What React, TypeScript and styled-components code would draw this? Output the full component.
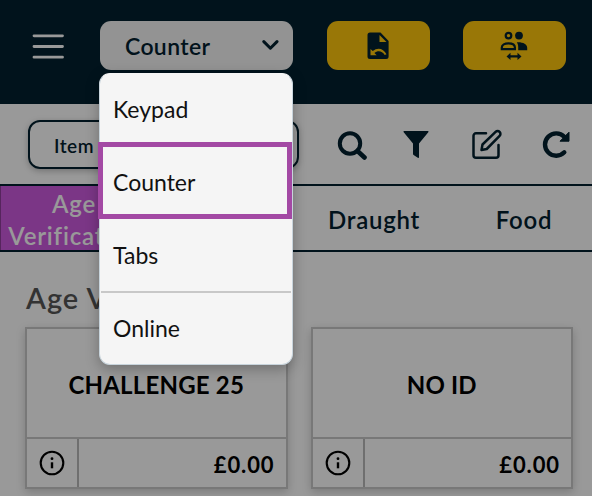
import React from 'react';
import styled, { createGlobalStyle } from 'styled-components';

const ink = '#03212f';

const GlobalStyle = createGlobalStyle`
  *, *::before, *::after { box-sizing: border-box; }
  body {
    margin: 0;
    overflow: hidden;
    background: #fff;
    font-family: Lato, "Liberation Sans", sans-serif;
  }
  svg { display: block; flex: none; }
`;

const Screen = styled.div`
  position: relative;
  width: 592px;
  height: 496px;
  overflow: hidden;
  background: #fff;
  color: ${ink};
`;

const Header = styled.header`
  display: flex;
  align-items: flex-start;
  height: 104px;
  padding: 21px 26px 0 32px;
  background: ${ink};
`;

const MenuButton = styled.div`
  display: flex;
  align-items: center;
  height: 51px;
  width: 68px;
`;

const SelectWrap = styled.div`
  width: 192.5px;
  margin-right: 34px;
`;

const Select = styled.div`
  display: flex;
  align-items: center;
  justify-content: space-between;
  height: 49px;
  padding: 1px 13px 0 25px;
  border-radius: 11px;
  background: #f5f5f5;
  font-size: 23px;
  font-weight: 600;
  letter-spacing: 0.35px;
`;

const Action = styled.div`
  display: flex;
  align-items: center;
  justify-content: center;
  width: 103px;
  height: 49px;
  padding-right: 1px;
  border-radius: 11px;
  background: #ffc60c;
  & + & { margin-left: 33px; }
`;

const Toolbar = styled.div`
  display: flex;
  align-items: flex-start;
  height: 80px;
  padding: 16px 20px 0 28px;
`;

const SearchField = styled.div`
  width: 271px;
  height: 49px;
  padding: 12px 24px 0;
  border: 2px solid ${ink};
  border-radius: 12px;
  box-shadow: 0 2px 6px rgba(0, 0, 0, 0.25);
  font-size: 19px;
  line-height: 24px;
  font-weight: 600;
  letter-spacing: 0.5px;
`;

const Tools = styled.div`
  display: grid;
  grid-template-columns: 66px 69px 70px 28px;
  margin: 9px 0 0 38px;
`;

const Tabs = styled.nav`
  display: grid;
  grid-template-columns: 150px 150px 150px 150px;
  height: 68px;
  border-top: 2px solid ${ink};
  border-bottom: 2px solid ${ink};
`;

const Tab = styled.div<{ $active?: boolean }>`
  display: flex;
  align-items: center;
  justify-content: center;
  height: 64px;
  padding: ${(p) => (p.$active ? '3px 3px 0 0' : '3px 2px 0 0')};
  text-align: center;
  font-size: 24px;
  line-height: 32px;
  font-weight: 600;
  letter-spacing: ${(p) => (p.$active ? '0.8px' : '0.7px')};
  color: ${(p) => (p.$active ? '#fff' : ink)};
  background: ${(p) => (p.$active ? '#cd5adf' : 'transparent')};
  border-left: ${(p) => (p.$active ? '1px solid #8f3f9c' : '0')};
`;

const Content = styled.main`
  padding: 26px 19px 0 25px;
`;

const Title = styled.h2`
  height: 49px;
  margin: 0;
  padding-left: 1px;
  font-size: 29px;
  line-height: 40px;
  font-weight: 600;
  letter-spacing: 1px;
  color: #555;
`;

const Cards = styled.div`
  display: flex;
  gap: 23px;
`;

const Card = styled.article`
  display: flex;
  flex-direction: column;
  width: 262.5px;
  height: 162px;
  border: 2px solid #c8c8c8;
  box-shadow: 0 3px 9px rgba(0, 0, 0, 0.2);
`;

const CardName = styled.div`
  display: flex;
  flex: 1;
  align-items: center;
  justify-content: center;
  padding-top: 3px;
  font-size: 24px;
  font-weight: 700;
  letter-spacing: 0.2px;
  color: #000;
`;

const CardFooter = styled.div`
  display: flex;
  height: 50px;
  border-top: 2px solid #c8c8c8;
`;

const InfoCell = styled.div`
  display: flex;
  align-items: center;
  justify-content: center;
  width: 52px;
  border-right: 2px solid #b9b9b9;
`;

const Price = styled.div`
  display: flex;
  flex: 1;
  align-items: center;
  justify-content: flex-end;
  padding: 2px 11px 0 0;
  font-size: 22px;
  font-weight: 700;
  letter-spacing: 0.9px;
  color: #000;
`;

const Backdrop = styled.div`
  position: absolute;
  inset: 0;
  background: rgba(0, 0, 0, 0.4);
`;

const Menu = styled.div`
  position: absolute;
  left: 99px;
  top: 73px;
  width: 193.5px;
  height: 292px;
  border: 1px solid #c8d4dc;
  border-top-color: #f5f5f5;
  border-radius: 11px;
  background: #f5f5f5;
  box-shadow: 0 4px 14px rgba(0, 0, 0, 0.28);
`;

const MenuItem = styled.div<{ $divided?: boolean }>`
  display: flex;
  align-items: center;
  height: 73px;
  margin: ${(p) => (p.$divided ? '-2px' : '0')} 1px 0;
  padding: 0 0 ${(p) => (p.$divided ? '2px' : '4px')} 12px;
  border-top: ${(p) => (p.$divided ? '2px solid #c8c8c8' : '0')};
  font-size: 23px;
  color: #111;
`;

const Highlight = styled.div`
  position: absolute;
  left: 98px;
  top: 142px;
  width: 194px;
  height: 77px;
  border: 5px solid #a349a4;
`;

const Burger = () => (
  <svg width="32" height="26" viewBox="0 0 32 26" stroke="#fff" strokeWidth="2.8" strokeLinecap="round">
    <path d="M2 1.800h28.500M2 12.500h28.500M2 23.200h28.500" />
  </svg>
);

const Chevron = () => (
  <svg width="18" height="12" viewBox="0 0 18 12" fill="none" stroke={ink} strokeWidth="3" strokeLinecap="round" strokeLinejoin="round">
    <path d="M1.800 1.600l6.600 6.600 6.600-6.600" />
  </svg>
);

const FileUndo = () => (
  <svg width="22" height="28" viewBox="0 0 22 28">
    <path fill={ink} d="M3 .5h10.500L21.600 9v15.500a2.500 2.500 0 0 1-2.500 2.500H3A2.500 2.500 0 0 1 .5 24.500V3A2.500 2.500 0 0 1 3 .5z" />
    <path fill="#ffc60c" d="M12.500 3v7h7z" />
    <path fill="#ffc60c" d="M3.500 17v6.200h6.200l-2.300-2.300c3.300-2.700 7.700-2.200 10.300 2l1.800-.7c-3-6.200-9.300-7.200-13.800-3.100z" />
  </svg>
);

const PeopleSwap = () => (
  <svg width="28" height="30" viewBox="0 0 28 30">
    <circle cx="8.500" cy="4.600" r="2.800" fill="none" stroke={ink} strokeWidth="2.200" />
    <circle cx="19" cy="4.600" r="3.900" fill={ink} />
    <path d="M1.800 18.100v-1.600c0-2.700 3-4.200 6.600-4.200s6.500 1.500 6.500 4.200v1.600z" fill="none" stroke={ink} strokeWidth="2.200" />
    <path d="M16.800 11.300c5.800-.4 10.400 1.700 10.400 5.500v2.500h-9v-3c0-2-.3-3.300-1.400-5z" fill={ink} />
    <path d="M6.500 25.400l4-3.600v2.500h7v-2.500l4 3.600-4 3.600v-2.500h-7v2.500z" fill={ink} />
  </svg>
);

const SearchIcon = () => (
  <svg width="30" height="32" viewBox="0 0 30 32" fill="none" stroke={ink}>
    <circle cx="13" cy="14.500" r="10.200" strokeWidth="4" />
    <path d="M20.500 22l7 6.500" strokeWidth="4.600" strokeLinecap="round" />
  </svg>
);

const FilterIcon = () => (
  <svg width="26" height="32" viewBox="0 0 26 32" fill={ink}>
    <path d="M1.200 2h23.600c.7 0 .9.700.5 1.200L16 14.500v13.700c0 .8-.7 1-1.200.6L10.600 26c-.4-.3-.6-.6-.6-1V14.500L.7 3.200C.3 2.700.5 2 1.200 2z" />
  </svg>
);

const EditIcon = () => (
  <svg width="30" height="32" viewBox="0 0 30 32" fill="none" stroke={ink} strokeWidth="2.500" strokeLinecap="round" strokeLinejoin="round">
    <path d="M14 4.300H4a2.500 2.500 0 0 0-2.500 2.500v19.500A2.500 2.500 0 0 0 4 28.800h20a2.500 2.500 0 0 0 2.500-2.500V16" />
    <path d="M9.500 21l1-5.500L23.600 2.900a2.700 2.700 0 0 1 4 4L14.700 20z" />
  </svg>
);

const RefreshIcon = () => (
  <svg width="28" height="32" viewBox="0 0 28 32">
    <path d="M22.300 23.300A11.200 11.200 0 1 1 22.300 7.800" fill="none" stroke={ink} strokeWidth="4.400" strokeLinecap="round" />
    <path d="M27 3.200v9h-9z" fill={ink} stroke={ink} strokeLinejoin="round" />
  </svg>
);

const InfoIcon = () => (
  <svg width="26" height="26" viewBox="0 0 26 26">
    <circle cx="13" cy="13" r="11.300" fill="none" stroke="#000" strokeWidth="2.100" />
    <path d="M13 12.300v6" stroke="#000" strokeWidth="2.400" />
    <circle cx="13" cy="8.700" r="1.400" fill="#000" />
  </svg>
);

const products = [
  { name: 'CHALLENGE 25', price: '£0.00' },
  { name: 'NO ID', price: '£0.00' },
];

const options = ['Keypad', 'Counter', 'Tabs', 'Online'];

export default function App() {
  return (
    <Screen>
      <GlobalStyle />
      <Header>
        <MenuButton><Burger /></MenuButton>
        <SelectWrap>
          <Select>Counter<Chevron /></Select>
        </SelectWrap>
        <Action><FileUndo /></Action>
        <Action><PeopleSwap /></Action>
      </Header>
      <Toolbar>
        <SearchField>Item</SearchField>
        <Tools>
          <SearchIcon />
          <FilterIcon />
          <EditIcon />
          <RefreshIcon />
        </Tools>
      </Toolbar>
      <Tabs>
        <Tab $active>Age<br />Verification</Tab>
        <Tab />
        <Tab>Draught</Tab>
        <Tab>Food</Tab>
      </Tabs>
      <Content>
        <Title>Age Verification</Title>
        <Cards>
          {products.map((p) => (
            <Card key={p.name}>
              <CardName>{p.name}</CardName>
              <CardFooter>
                <InfoCell><InfoIcon /></InfoCell>
                <Price>{p.price}</Price>
              </CardFooter>
            </Card>
          ))}
        </Cards>
      </Content>
      <Backdrop />
      <Menu>
        {options.map((o) => (
          <MenuItem key={o} $divided={o === 'Online'}>{o}</MenuItem>
        ))}
      </Menu>
      <Highlight />
    </Screen>
  );
}
